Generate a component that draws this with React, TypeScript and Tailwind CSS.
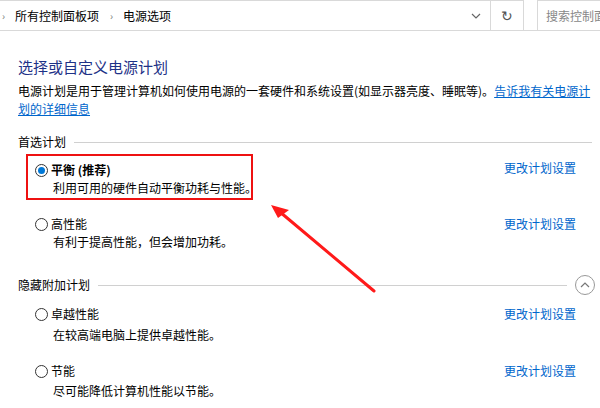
import React from "react";

const font = { fontFamily: '"Noto Sans CJK SC", "Microsoft YaHei", sans-serif' };

const Radio = ({ checked }: { checked?: boolean }) => (
  <span className="w-[13px] h-[13px] rounded-full border border-[#333] bg-white flex items-center justify-center shrink-0">
    {checked && <span className="w-[7px] h-[7px] rounded-full bg-[#0078d7]" />}
  </span>
);

const Plan = ({ name, desc, checked, bold, gap = "mt-[1px]" }: { name: string; desc: string; checked?: boolean; bold?: boolean; gap?: string }) => (
  <div className="flex flex-col whitespace-nowrap">
    <div className="flex items-center gap-[3px] h-[18px]">
      <Radio checked={checked} />
      <span className={bold ? "font-bold text-[12px] text-black" : "text-[12px] text-black"}>{name}</span>
    </div>
    <div className={`pl-[18px] ${gap} text-[12px] text-black leading-[18px]`}>{desc}</div>
  </div>
);

const Row = ({ children, top = "" }: { children: React.ReactNode; top?: string }) => (
  <div className="flex justify-between">
    <div>{children}</div>
    <a className={`text-[12px] leading-[18px] text-[#0066cc] mr-[16px] ${top}`}>更改计划设置</a>
  </div>
);

export default function App() {
  return (
    <div className="w-[600px] h-[408px] bg-white relative overflow-hidden" style={font}>
      {/* address bar */}
      <div className="h-[31px] flex items-stretch border-b border-[#d9d9d9]">
        <div className="flex items-center border-t border-r border-[#d9d9d9] h-[30px] w-[524px] flex-none">
          <span className="text-[10px] text-[#777] ml-[2px]">›</span>
          <span className="text-[12px] text-black ml-[10px]">所有控制面板项</span>
          <span className="text-[10px] text-[#777] ml-[11px]">›</span>
          <span className="text-[12px] text-black ml-[10px]">电源选项</span>
          <div className="flex-1" />
          <svg width="10" height="6" viewBox="0 0 10 6" className="mr-[9px]">
            <path d="M1 1 L5 5 L9 1" fill="none" stroke="#666" strokeWidth="1.2" />
          </svg>
          <div className="w-px h-full bg-[#d9d9d9]" />
          <span className="w-[32px] flex items-center justify-center text-[14px] text-[#555]">↻</span>
        </div>
        <div className="w-[13px]" />
        <div className="flex-1 border-t border-l border-[#d9d9d9] h-[30px] flex items-center pl-[8px] text-[12px] text-[#888] whitespace-nowrap overflow-hidden">
          搜索控制面板
        </div>
      </div>

      <div className="pl-[18px] pr-[8px]">
        <div className="mt-[26px] text-[15px] text-[#1e3287] leading-[20px]">选择或自定义电源计划</div>
        <div className="mt-[5px] text-[12px] text-black leading-[18px] whitespace-nowrap">
          电源计划是用于管理计算机如何使用电源的一套硬件和系统设置(如显示器亮度、睡眠等)。
          <a className="text-[#0066cc] underline">告诉我有关电源计</a>
        </div>
        <div className="text-[12px] leading-[18px]">
          <a className="text-[#0066cc] underline">划的详细信息</a>
        </div>

        <div className="mt-[15px] flex items-center gap-[8px]">
          <span className="text-[12px] text-black">首选计划</span>
          <div className="flex-1 h-px bg-[#d0d0d0]" />
        </div>

        <div className="mt-[3px]">
          <Row top="mt-[5px]">
            <div className="ml-[8px] border-[2px] border-[#ee1111] pl-[7px] pt-[5px] pb-[1px] w-[227px]">
              <Plan name="平衡 (推荐)" desc="利用可用的硬件自动平衡功耗与性能。" checked bold gap="mt-0" />
            </div>
          </Row>
        </div>
        <div className="mt-[15px]">
          <Row>
            <div className="ml-[17px]">
              <Plan name="高性能" desc="有利于提高性能，但会增加功耗。" gap="mt-0" />
            </div>
          </Row>
        </div>

        <div className="mt-[24px] flex items-center gap-[8px]">
          <span className="text-[12px] text-black">隐藏附加计划</span>
          <div className="flex-1 h-px bg-[#d0d0d0]" />
          <span className="w-[20px] h-[20px] rounded-full border border-[#999] flex items-center justify-center -mr-[3px]">
            <svg width="10" height="6" viewBox="0 0 10 6">
              <path d="M1 5 L5 1 L9 5" fill="none" stroke="#777" strokeWidth="1.2" />
            </svg>
          </span>
        </div>

        <div className="mt-[10px]">
          <Row>
            <div className="ml-[17px]">
              <Plan name="卓越性能" desc="在较高端电脑上提供卓越性能。" gap="mt-[3px]" />
            </div>
          </Row>
        </div>
        <div className="mt-[18px]">
          <Row>
            <div className="ml-[17px]">
              <Plan name="节能" desc="尽可能降低计算机性能以节能。" gap="mt-[2px]" />
            </div>
          </Row>
        </div>
      </div>

      {/* red annotation arrow */}
      <svg className="absolute left-0 top-0 pointer-events-none" width="600" height="408">
        <line x1="374" y1="291" x2="280" y2="212" stroke="#ff1a1a" strokeWidth="3" strokeLinecap="round" />
        <polygon points="271,205 289,210 278,218" fill="#ff1a1a" />
      </svg>
    </div>
  );
}
